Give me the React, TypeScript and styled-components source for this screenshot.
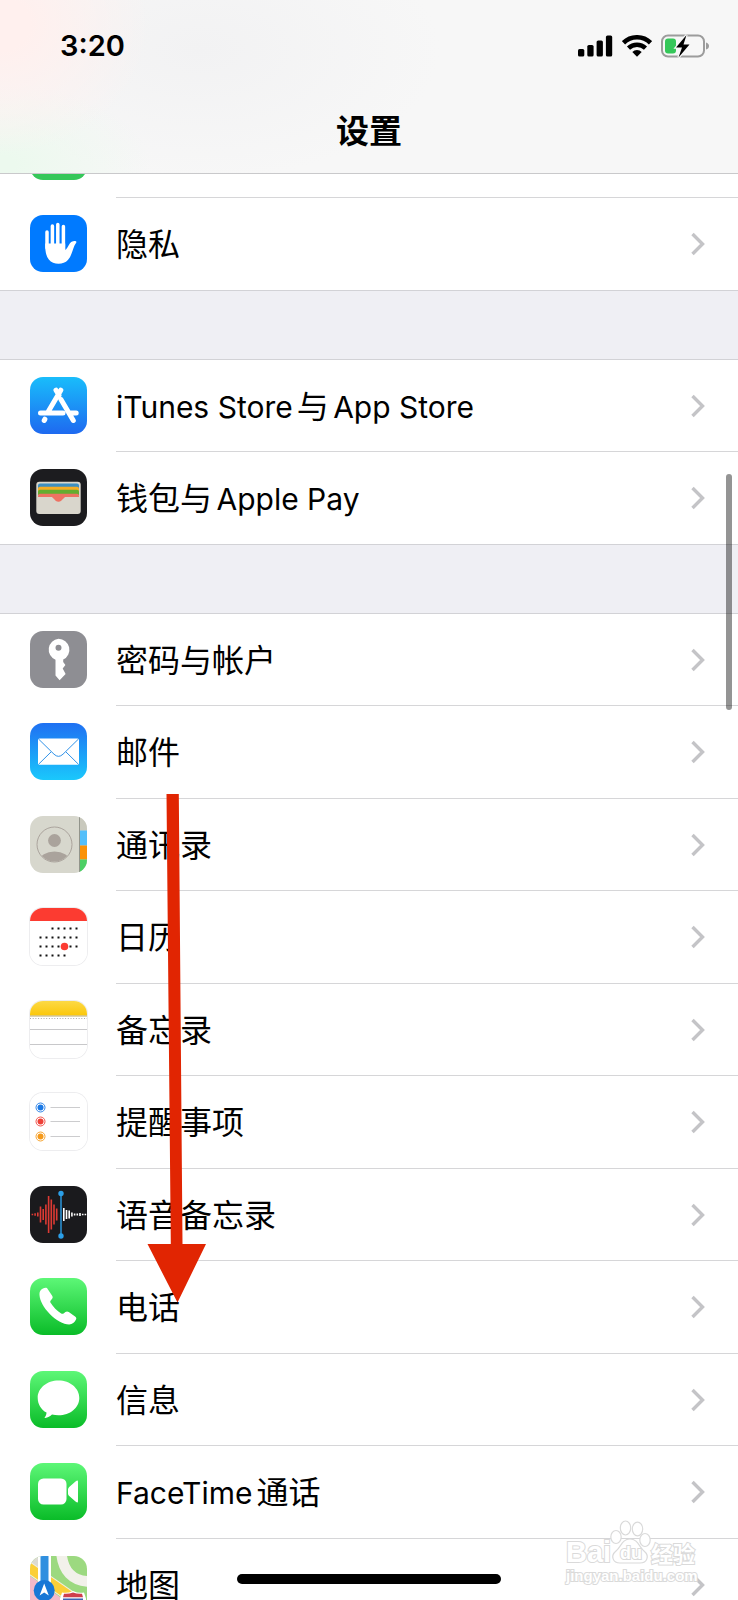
import React from 'react';
import styled, { createGlobalStyle, css } from 'styled-components';

const GlobalStyle = createGlobalStyle`
  *, *::before, *::after { box-sizing: border-box; }
  body {
    margin: 0;
    background: #efeff4;
    color: #000;
    font-family: Inter, "Noto Sans CJK SC", sans-serif;
  }
`;

const Screen = styled.div`
  position: relative;
  height: 100vh;
  overflow: hidden;
  display: flex;
  flex-direction: column;
  background: #efeff4;
`;

const Header = styled.header`
  flex: none;
  height: 174px;
  display: flex;
  flex-direction: column;
  justify-content: space-between;
  padding: 26px 28px 20px 60px;
  border-bottom: 1px solid #c9c9cb;
  background:
    radial-gradient(ellipse 150px 130px at 0 24px, #fff0ee 20%, rgba(255, 240, 238, 0) 100%),
    radial-gradient(ellipse 150px 80px at 0 164px, #ecf9ee 10%, rgba(236, 249, 238, 0) 100%),
    radial-gradient(ellipse 240px 130px at 200px 50px, #f2f2f3, rgba(242, 242, 243, 0)),
    #f7f7f7;
`;

const StatusBar = styled.div`
  display: flex;
  align-items: center;
  justify-content: space-between;
  height: 40px;
`;

const Clock = styled.time`
  font-size: 29px;
  line-height: 40px;
  font-weight: 600;
`;

const StatusIcons = styled.div`
  display: flex;
  align-items: center;
  gap: 9px;
  svg { display: block; }
`;

const Title = styled.h1`
  margin: 0 32px 0 0;
  font-size: 33px;
  line-height: 44px;
  font-weight: 600;
  text-align: center;
`;

const Content = styled.main`
  flex: 1;
  min-height: 0;
  overflow: hidden;
`;

const Group = styled.ul`
  list-style: none;
  margin: 0;
  padding: 0;
  background: #fff;

  & + & {
    margin-top: 68px;
    border-top: 1px solid #d2d2d6;
  }
`;

const Label = styled.span`
  flex: 1;
  padding-top: 2px;
  font-size: 32px;
  line-height: 40px;
  white-space: nowrap;
`;

const Latin = styled.span<{ $place: 'before' | 'after' }>`
  font-size: 30px;
  ${({ $place }) => ($place === 'before' ? 'margin-right: 4px;' : 'margin-left: -4px;')}
`;

const RowBody = styled.span`
  flex: 1;
  align-self: stretch;
  display: flex;
  align-items: center;
  padding-right: 33px;
  border-bottom: 1px solid #d6d6d8;
`;

const RowItem = styled.li<{ $cut?: boolean }>`
  display: flex;
  height: 92px;

  &:nth-child(even) { height: 93px; }

  &:last-child { border-bottom: 1px solid #d2d2d6; }
  &:last-child ${RowBody} { border-bottom: 0; }

  ${({ $cut }) => $cut && css`
    height: 24px;
    overflow: hidden;
    align-items: flex-end;
  `}
`;

const RowLink = styled.a`
  flex: 1;
  display: flex;
  align-items: flex-start;
  gap: 29px;
  height: 100%;
  padding-left: 30px;
  color: inherit;
  text-decoration: none;
`;

const CutRow = styled.a`
  flex: 1;
  display: flex;
  gap: 29px;
  height: 92px;
  padding-left: 30px;
`;

const AppIcon = styled.svg<{ $outlined?: boolean }>`
  flex: none;
  display: block;
  width: 57px;
  height: 57px;
  margin-top: 17px;
  border-radius: 13px;
  ${({ $outlined }) => $outlined && css`box-shadow: 0 0 0 1px #ededef;`}
`;

const ScrollThumb = styled.div`
  position: absolute;
  top: 474px;
  right: 6px;
  width: 6px;
  height: 236px;
  border-radius: 3px;
  background: rgba(0, 0, 0, 0.42);
`;

const HomeIndicator = styled.div`
  position: absolute;
  bottom: 16px;
  left: 50%;
  width: 264px;
  height: 10px;
  margin-left: -132px;
  border-radius: 5px;
  background: #000;
`;

const ArrowMark = styled.svg`
  position: absolute;
  top: 794px;
  left: 147px;
  pointer-events: none;
`;

const Watermark = styled.svg`
  position: absolute;
  right: 32px;
  bottom: 10px;
  pointer-events: none;
`;

const Chevron = () => (
  <svg width="14" height="24" viewBox="0 0 14 24" fill="none" aria-hidden="true">
    <path d="M1.500 2 11.500 12 1.500 22" stroke="#c4c4c7" strokeWidth="3.400" />
  </svg>
);

type IconProps = { outlined?: boolean; children: React.ReactNode };
const Icon = ({ outlined, children }: IconProps) => (
  <AppIcon viewBox="0 0 57 57" $outlined={outlined} aria-hidden="true">{children}</AppIcon>
);

type FillProps = { id: string; from: string; to: string; height?: number };
const Gradient = ({ id, from, to, height = 57 }: FillProps) => (
  <>
    <defs>
      <linearGradient id={id} x1="0" y1="0" x2="0" y2="1">
        <stop offset="0" stopColor={from} />
        <stop offset="1" stopColor={to} />
      </linearGradient>
    </defs>
    <rect width="57" height={height} fill={`url(#${id})`} />
  </>
);

const BatteryAppIcon = () => (
  <Icon><rect width="57" height="57" fill="#35c759" /></Icon>
);

const PrivacyIcon = () => (
  <Icon>
    <rect width="57" height="57" fill="#007aff" />
    <g stroke="#fff" strokeWidth="3.5" strokeLinecap="round">
      <path d="M17 17v16M22.4 11v20M27.8 9.5v20M33.4 11.5v20" />
    </g>
    <path fill="#fff" d="M15.2 28.5h20l.2 6.5c2.200-1.500 3.500-6.500 6.200-8.200 2-1.200 4.800-1 4.800.2 0 1-1.200 1.800-1.900 3.500-2.300 5.500-3 10.500-6.600 14.500-2.300 2.600-5.600 3.700-9.300 3.700-4 0-7.400-1.200-9.800-4.200-3.200-4-3.600-9.500-3.600-16Z" />
  </Icon>
);

const StoreIcon = () => (
  <Icon>
    <Gradient id="store" from="#19bdfb" to="#1e69f0" />
    <g stroke="#fff" strokeWidth="5" strokeLinecap="round" fill="none">
      <path d="M30.800 13.200 18.300 34.500M26 13.200l3 5M31 22.500l12.300 21M10.500 36h22.500M41 36h5.200M14.900 42.200l-.7 1.300" />
    </g>
  </Icon>
);

const WalletIcon = () => (
  <Icon>
    <rect width="57" height="57" fill="#1c1c1f" />
    <rect x="6.300" y="12.700" width="44.400" height="32.300" rx="3" fill="#d9d6cc" />
    <path fill="#3d8fc0" d="M8 20v-3.600q0-2 2-2h37q2 0 2 2V20z" />
    <path fill="#f5ad23" d="M8 23v-3.300q0-2 2-2h37q2 0 2 2V23z" />
    <path fill="#65ad30" d="M8 26v-3.300q0-2 2-2h37q2 0 2 2V26z" />
    <path fill="#ee7263" d="M8 28v-1.300q0-2 2-2h37q2 0 2 2V28z" />
    <path fill="#ee7263" d="M20 27.500c3.500 0 4.500 5.200 8.500 5.200s5-5.200 8.500-5.200z" />
  </Icon>
);

const KeyIcon = () => (
  <Icon>
    <rect width="57" height="57" fill="#8e8e93" />
    <path fill="#fff" fillRule="evenodd" d="M28.500 7.700a11 11 0 0 1 4.700 20.900V31l2.200 3-2.700 3.400 2.900 5.600-6 6.300-4.100-4.800V28.800A11 11 0 0 1 28.500 7.700Zm0 6a3 3 0 1 0 0 6 3 3 0 0 0 0-6Z" />
  </Icon>
);

const MailIcon = () => (
  <Icon>
    <Gradient id="mail" from="#1f70f2" to="#1ac8fc" />
    <rect x="8" y="15.500" width="41" height="26.300" rx="1.500" fill="#fff" />
    <path d="M8.500 16 24 31.200q4.500 4.300 9 0L48.500 16M8.500 41.300 21 29M48.500 41.300 36 29" fill="none" stroke="#3092e8" strokeWidth="1" />
  </Icon>
);

const ContactsIcon = () => (
  <Icon>
    <defs><clipPath id="face"><circle cx="24.500" cy="28.500" r="17" /></clipPath></defs>
    <rect width="57" height="57" fill="#d7d7cd" />
    <rect x="49.500" width="8" height="14.500" fill="#c9c9bd" />
    <rect x="49.500" y="14.500" width="8" height="15" fill="#54bffa" />
    <rect x="49.500" y="29.500" width="8" height="14" fill="#fb9207" />
    <rect x="49.500" y="43.500" width="8" height="14" fill="#4ccf65" />
    <path d="M49.500 0v57" stroke="#92948b" strokeWidth="1" />
    <g clipPath="url(#face)" fill="#aaa39c">
      <circle cx="24.500" cy="24.500" r="6.400" />
      <ellipse cx="24.500" cy="45" rx="15" ry="9.500" />
    </g>
    <circle cx="24.500" cy="28.500" r="17.500" fill="none" stroke="#aaa39c" />
  </Icon>
);

const calendarRows = [
  { y: 20.5, from: 2, to: 6 },
  { y: 29.5, from: 0, to: 6 },
  { y: 38.5, from: 0, to: 6 },
  { y: 47.5, from: 0, to: 4 },
];

const CalendarIcon = () => (
  <Icon outlined>
    <rect width="57" height="57" fill="#fff" />
    <rect width="57" height="13" fill="#fc3b31" />
    {calendarRows.map(({ y, from, to }) =>
      Array.from({ length: to - from + 1 }, (_, i) => (
        <rect key={`${y}-${i}`} x={9.5 + (from + i) * 6} y={y - 1} width="2" height="2" fill="#111" />
      )),
    )}
    <circle cx="34.500" cy="38.500" r="3.800" fill="#fc3b31" />
  </Icon>
);

const NotesIcon = () => (
  <Icon outlined>
    <rect y="14" width="57" height="43" fill="#fff" />
    <Gradient id="notes" from="#fcd946" to="#fbc70a" height={14.5} />
    <path d="M0 15h57" stroke="#bba96b" />
    <path d="M0 17.500h57" stroke="#aaa" strokeWidth="1" strokeDasharray="1 1.700" />
    <path d="M0 28.500h57M0 43.500h57" stroke="#c8c8ca" />
  </Icon>
);

const reminders = [
  { y: 14.5, color: '#1b79e5' },
  { y: 28.5, color: '#ee4037' },
  { y: 43.5, color: '#f59a1b' },
];

const RemindersIcon = () => (
  <Icon outlined>
    <rect width="57" height="57" fill="#fff" />
    {reminders.map(({ y, color }) => (
      <g key={y}>
        <circle cx="10.500" cy={y} r="3" fill={color} />
        <circle cx="10.500" cy={y} r="4.500" fill="none" stroke={color} strokeWidth=".9" />
        <path d={`M20.500 ${y}h29.500`} stroke="#ccccce" />
      </g>
    ))}
  </Icon>
);

const redBars = [1.5, 2.5, 4, 16, 11, 20, 37, 30, 20, 12];
const whiteBars = [13, 9, 8, 4, 2, 2, 3, 1.5, 1.5];

const VoiceIcon = () => (
  <Icon>
    <rect width="57" height="57" fill="#1a1a1d" />
    {redBars.map((h, i) => (
      <rect key={i} x={1.6 + i * 2.7} y={28.5 - h / 2} width="1.600" height={h} fill="#dd3a34" />
    ))}
    {whiteBars.map((h, i) => (
      <rect key={i} x={33 + i * 2.7} y={28.5 - h / 2} width="1.600" height={h} fill="#fff" />
    ))}
    <path d="M31 7.500v42.500" stroke="#2b9fe8" strokeWidth="1.400" />
    <circle cx="31" cy="7.500" r="2.700" fill="#2b9fe8" />
    <circle cx="31" cy="50" r="2.700" fill="#2b9fe8" />
  </Icon>
);

const PhoneIcon = () => (
  <Icon>
    <Gradient id="phone" from="#5df777" to="#0abc28" />
    <path fill="#fff" d="M10.500 12.500c1.500-1.900 3.400-2.700 5.100-2.700 1 0 1.600.5 2.200 1.400l4.200 6.200c.9 1.300.9 2.200.1 3.300l-1.400 1.800c-.6.8-.6 1.500-.1 2.300 2.600 4.300 6.300 8 10.600 10.700.9.500 1.600.5 2.400-.1l1.800-1.300c1.100-.8 2.200-.8 3.400 0l6.300 4.300c1.300.9 1.500 1.900.9 3.200-1.300 2.900-3.700 4.800-6.800 4.800-5.900 0-13.500-4.600-19.400-10.500C13.700 29.800 9.800 22.500 9.500 17c-.1-1.700.1-3.200 1-4.500Z" />
  </Icon>
);

const MessagesIcon = () => (
  <Icon>
    <Gradient id="messages" from="#5df777" to="#0abc28" />
    <path fill="#fff" d="M28.500 9.500c11.600 0 20.800 7.700 20.800 17.400s-9.200 17.400-20.800 17.400c-2.300 0-4.500-.3-6.500-.8-1.800 1.900-4.200 3.100-6.900 3.500-.5 0-.6-.4-.3-.8 1.100-1.200 1.700-2.800 1.700-4.600-5.400-3.200-8.800-8.600-8.800-14.700C7.700 17.200 16.900 9.500 28.500 9.500Z" />
  </Icon>
);

const FaceTimeIcon = () => (
  <Icon>
    <Gradient id="facetime" from="#5df777" to="#0abc28" />
    <rect x="8" y="15.500" width="28.500" height="26" rx="5.500" fill="#fff" />
    <path fill="#fff" d="M38 26.500v4q0 1.500 1.200 2.500l6.600 5.700q2.200 1.800 2.200-.5V18.800q0-2.300-2.200-.5L39.200 24q-1.200 1-1.200 2.500Z" />
  </Icon>
);

const MapsIcon = () => (
  <Icon>
    <rect width="57" height="57" fill="#9cd980" />
    <path d="M0 0h12v14L0 9z" fill="#dcdad2" />
    <path d="M0 20 30 41v16H0z" fill="#f4b9c9" />
    <path d="M-2 11 60 54" stroke="#f1efe3" strokeWidth="11.500" />
    <path d="M-2 11 60 54" stroke="#fbcf38" strokeWidth="9.500" />
    <path d="M31.500-2C33 14 42 25 59 25.500" fill="none" stroke="#f2f1ea" strokeWidth="10.500" />
    <rect x="8" width="13" height="30" fill="#fff" />
    <rect x="10.500" width="8" height="30" fill="#2f8fdf" />
    <circle cx="14.200" cy="34.500" r="10.500" fill="#1777d6" />
    <path d="m14.200 27.500 4.600 12-4.600-3-4.600 3z" fill="#fff" />
    <path d="M32 36.500q5 1.200 11-1.500 6 2.700 11 1.500l2 6v15H30v-15z" fill="#fff" />
    <path d="M34 37.800q5 .4 9-1.400 4 1.800 9 1.400l1 3.400H33z" fill="#cf3f4c" />
    <path d="M33 42.500h20V57H33z" fill="#3e62b4" />
  </Icon>
);

type RowData = { label: React.ReactNode; icon: () => React.JSX.Element };

const groups: RowData[][] = [
  [{ label: '隐私', icon: PrivacyIcon }],
  [
    {
      label: <><Latin $place="before">iTunes Store</Latin>与<Latin $place="after"> App Store</Latin></>,
      icon: StoreIcon,
    },
    { label: <>钱包与<Latin $place="after"> Apple Pay</Latin></>, icon: WalletIcon },
  ],
  [
    { label: '密码与帐户', icon: KeyIcon },
    { label: '邮件', icon: MailIcon },
    { label: '通讯录', icon: ContactsIcon },
    { label: '日历', icon: CalendarIcon },
    { label: '备忘录', icon: NotesIcon },
    { label: '提醒事项', icon: RemindersIcon },
    { label: '语音备忘录', icon: VoiceIcon },
    { label: '电话', icon: PhoneIcon },
    { label: '信息', icon: MessagesIcon },
    { label: <><Latin $place="before">FaceTime</Latin>通话</>, icon: FaceTimeIcon },
    { label: '地图', icon: MapsIcon },
  ],
];

const Row = ({ label, icon: RowIcon }: RowData) => (
  <RowItem>
    <RowLink href="#">
      <RowIcon />
      <RowBody>
        <Label>{label}</Label>
        <Chevron />
      </RowBody>
    </RowLink>
  </RowItem>
);

const Signal = () => (
  <svg width="35" height="22" viewBox="0 0 35 22" aria-hidden="true">
    <rect x="0" y="14" width="6.300" height="7.500" rx="1.600" />
    <rect x="9.300" y="10" width="6.300" height="11.500" rx="1.600" />
    <rect x="18.600" y="5.500" width="6.300" height="16" rx="1.600" />
    <rect x="27.900" y="0.500" width="6.300" height="21" rx="1.600" />
  </svg>
);

const Wifi = () => (
  <svg width="30" height="22" viewBox="0 0 30 22" fill="none" stroke="#000" aria-hidden="true">
    <path d="M1.500 7.800a19.300 19.300 0 0 1 27 0" strokeWidth="4.600" />
    <path d="M6.500 13.200a12.200 12.200 0 0 1 17 0" strokeWidth="4.400" />
    <path d="m15 21.800-4.700-4.800a6.600 6.600 0 0 1 9.400 0z" fill="#000" stroke="none" />
  </svg>
);

const Battery = () => (
  <svg width="49" height="24" viewBox="0 0 49 24" aria-hidden="true">
    <rect x="1" y="1.500" width="42" height="21" rx="6" fill="none" stroke="#9c9c9c" strokeWidth="2" />
    <path d="M45 8.500q3 1 3 3.500t-3 3.500z" fill="#9c9c9c" />
    <rect x="4" y="4.500" width="11" height="15" rx="3" fill="#35c759" />
    <path d="M25.500 1 15 13.500h6L17.500 23.500 28.500 10.500h-6z" fill="#000" stroke="#f7f7f7" strokeWidth="2.400" paintOrder="stroke" />
  </svg>
);

export default function App() {
  return (
    <>
      <GlobalStyle />
      <Screen>
        <Header>
          <StatusBar>
            <Clock>3:20</Clock>
            <StatusIcons>
              <Signal />
              <Wifi />
              <Battery />
            </StatusIcons>
          </StatusBar>
          <Title>设置</Title>
        </Header>
        <Content>
          {groups.map((rows, index) => (
            <Group key={index}>
              {index === 0 && (
                <RowItem $cut>
                  <CutRow href="#" aria-hidden="true" tabIndex={-1}>
                    <BatteryAppIcon />
                    <RowBody />
                  </CutRow>
                </RowItem>
              )}
              {rows.map((row, rowIndex) => <Row key={rowIndex} {...row} />)}
            </Group>
          ))}
        </Content>
        <Watermark width="142" height="74" viewBox="0 0 142 74" aria-hidden="true">
          <g fill="#fff" stroke="#dadada" strokeWidth="1.200">
            <ellipse cx="52" cy="21" rx="5.200" ry="6.500" />
            <ellipse cx="61.500" cy="12" rx="5.200" ry="7" />
            <ellipse cx="73.500" cy="13" rx="5.200" ry="6.800" />
            <ellipse cx="81" cy="24" rx="5.200" ry="6.500" />
            <path d="M66 23c8 0 9 8 14 12 6 5 3 12-4 12H56c-7 0-10-7-4-12 5-4 6-12 14-12Z" />
          </g>
          <g fill="#fff" stroke="#dadada" strokeWidth="2" paintOrder="stroke" fontFamily="'Liberation Sans', 'Noto Sans CJK SC', sans-serif" fontWeight="700">
            <text x="2" y="46" fontSize="29">Bai</text>
            <text x="56" y="43" fontSize="18">du</text>
            <text x="87" y="46" fontSize="22">经验</text>
            <text x="2" y="65" fontSize="15">jingyan.baidu.com</text>
          </g>
        </Watermark>
        <ScrollThumb />
        <ArrowMark width="60" height="509" viewBox="0 0 60 509" aria-hidden="true">
          <path d="M19.500 0h12.300L35.500 450H59L30.500 508.500 .5 450h23.300z" fill="#e12502" />
        </ArrowMark>
        <HomeIndicator />
      </Screen>
    </>
  );
}
